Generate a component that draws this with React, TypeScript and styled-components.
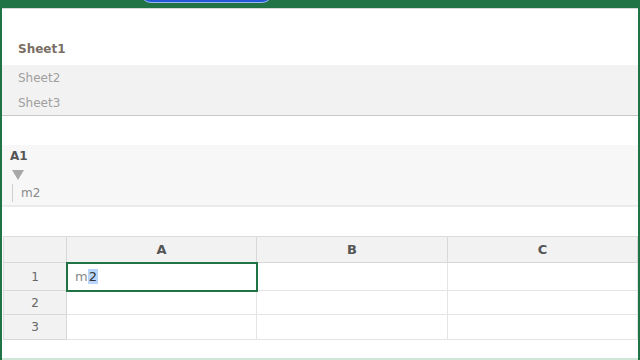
import React from "react";
import styled, { createGlobalStyle } from "styled-components";

const GREEN = "#217346";

const Global = createGlobalStyle`
  html, body { margin: 0; padding: 0; background: #fff; }
  body { font-family: "DejaVu Sans", "Noto Sans", sans-serif; overflow: hidden; }
`;

const Frame = styled.div`
  width: 640px;
  height: 360px;
  box-sizing: border-box;
  border-left: 2px solid ${GREEN};
  border-right: 2px solid ${GREEN};
  display: flex;
  flex-direction: column;
  position: relative;
  overflow: hidden;
`;

const TopBar = styled.div`
  height: 8px;
  flex: none;
  background: ${GREEN};
  border-bottom: 1px solid #d6d6d6;
  display: flex;
  align-items: flex-end;
  padding-left: 140px;
  overflow: hidden;
  margin: 0 -2px;
`;

const Pill = styled.button`
  width: 133px;
  height: 22px;
  margin-bottom: 5px;
  border-radius: 11px;
  background: #2457d6;
  border: 1px solid #9db8ef;
  padding: 0;
`;

const SheetList = styled.div`
  padding-top: 27px;
  border-bottom: 1px solid #c8c8c8;
  display: flex;
  flex-direction: column;
`;

const SheetRow = styled.div<{ $active?: boolean }>`
  height: ${(p) => (p.$active ? 29 : 25)}px;
  display: flex;
  align-items: ${(p) => (p.$active ? "flex-start" : "center")};
  padding-top: ${(p) => (p.$active ? 6 : 0)}px;
  box-sizing: border-box;
  padding-left: 16px;
  font-size: 12px;
  font-weight: ${(p) => (p.$active ? 700 : 400)};
  color: ${(p) => (p.$active ? "#7a6e64" : "#a0a0a0")};
  background: ${(p) => (p.$active ? "#fff" : "#f2f2f2")};
`;

const FormulaArea = styled.div`
  margin-top: 29px;
  background: #f7f7f7;
  border-bottom: 2px solid #ebebeb;
  padding: 3px 0 3px 8px;
  display: flex;
  flex-direction: column;
`;

const CellName = styled.div`
  font-size: 12px;
  font-weight: 700;
  color: #555;
  height: 17px;
  line-height: 17px;
`;

const Caret = styled.div`
  width: 0;
  height: 0;
  margin: 5px 0 4px 2px;
  border-left: 6px solid transparent;
  border-right: 6px solid transparent;
  border-top: 10px solid #a8a8a8;
`;

const FormulaInput = styled.div`
  margin-left: 2px;
  border-left: 1px solid #d0d0d0;
  padding: 1px 0 0 8px;
  height: 17px;
  line-height: 17px;
  font-size: 12px;
  color: #8a8a8a;
`;

const Grid = styled.div`
  margin-top: 29px;
  margin-left: 1px;
  display: grid;
  grid-template-columns: 63px 190px 191px 190px;
  grid-template-rows: 26px 28px 24px 25px;
  border-top: 1px solid #dcdcdc;
  border-left: 1px solid #dcdcdc;
  width: max-content;
`;

const Cell = styled.div<{ $head?: boolean; $selected?: boolean }>`
  box-sizing: border-box;
  border-right: 1px solid ${(p) => (p.$head ? "#d8d8d8" : "#e4e4e4")};
  border-bottom: 1px solid ${(p) => (p.$head ? "#d8d8d8" : "#e4e4e4")};
  background: ${(p) => (p.$head ? "#f2f2f2" : "#fff")};
  display: flex;
  align-items: center;
  justify-content: ${(p) => (p.$head ? "center" : "flex-start")};
  font-size: 12px;
  color: #666;
  position: relative;
  ${(p) =>
    p.$selected
      ? `outline: 2px solid ${GREEN}; outline-offset: -1px; z-index: 1; padding-left: 8px; font-size: 13px;`
      : ""}
`;

const ColHead = styled.span`
  font-weight: 700;
  font-size: 13px;
  color: #555;
`;

const Typed = styled.span`
  color: #8a8a8a;
`;

const Selection = styled.span`
  background: #b8d6fb;
  color: #333;
  padding: 0 1px;
`;

const BottomLine = styled.div`
  margin-top: auto;
  height: 2px;
  background: #cfe6d6;
`;

export default function App() {
  const cols = ["A", "B", "C"];
  return (
    <>
      <Global />
      <Frame>
        <TopBar>
          <Pill aria-label="toolbar" />
        </TopBar>
        <SheetList>
          <SheetRow $active>Sheet1</SheetRow>
          <SheetRow>Sheet2</SheetRow>
          <SheetRow>Sheet3</SheetRow>
        </SheetList>
        <FormulaArea>
          <CellName>A1</CellName>
          <Caret />
          <FormulaInput>m2</FormulaInput>
        </FormulaArea>
        <Grid>
          <Cell $head />
          {cols.map((c) => (
            <Cell $head key={c}>
              <ColHead>{c}</ColHead>
            </Cell>
          ))}
          {[1, 2, 3].map((r) => (
            <React.Fragment key={r}>
              <Cell $head>{r}</Cell>
              {cols.map((c) =>
                r === 1 && c === "A" ? (
                  <Cell key={c} $selected>
                    <Typed>m</Typed>
                    <Selection>2</Selection>
                  </Cell>
                ) : (
                  <Cell key={c} />
                )
              )}
            </React.Fragment>
          ))}
        </Grid>
        <BottomLine />
      </Frame>
    </>
  );
}
